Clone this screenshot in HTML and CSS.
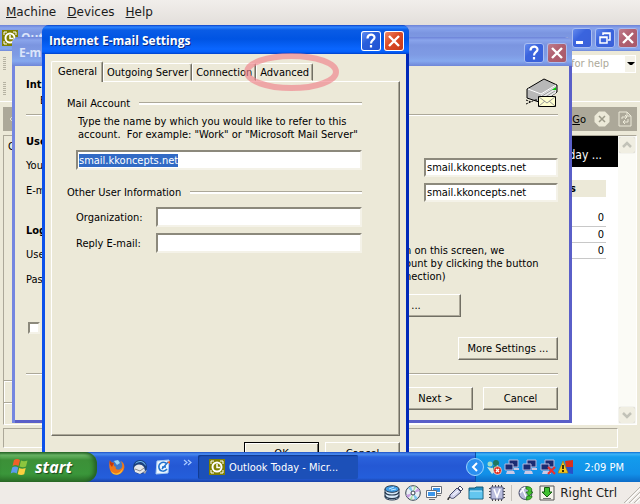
FILE: index.html
```
<!DOCTYPE html>
<html lang="en">
<head>
  <meta charset="UTF-8">
  <title>Internet E-mail Settings</title>
  <link rel="stylesheet" href="styles.css">
</head>
<body>
<nav class="vm-menu">
  <a href="#"><u>M</u>achine</a>
  <a href="#"><u>D</u>evices</a>
  <a href="#"><u>H</u>elp</a>
</nav>

<main class="desktop">
  <!-- Outlook main window -->
  <section class="outlook">
    <header class="titlebar inactive">
      <svg class="clock" width="16" height="16" viewBox="0 0 16 16"><rect width="16" height="16" fill="#808000"/><path d="M2 5V2h3M11 2h3v3M14 11v3h-3M5 14H2v-3" fill="none" stroke="#fff"/><circle cx="8" cy="8" r="4.5" fill="none" stroke="#fff" stroke-width="2"/><path d="M8 5v3.500h3" fill="none" stroke="#fff" stroke-width="1.500"/></svg>
      <h2>Out</h2>
      <button class="cap" aria-label="Minimize"><svg width="20" height="20" viewBox="0 0 20 20"><path d="M4 13h7v3H4z" fill="#fff"/></svg></button>
      <button class="cap" aria-label="Restore"><svg width="20" height="20" viewBox="0 0 20 20"><path d="M8 7V5h7v7h-2M8 5.500h7" fill="none" stroke="#fff" stroke-width="1.500"/><path d="M5 9h7v6H5zM5 9.500h7" fill="none" stroke="#fff" stroke-width="1.500"/></svg></button>
      <button class="cap close" aria-label="Close"><svg width="20" height="20" viewBox="0 0 20 20"><path d="M5 5l10 10M15 5L5 15" stroke="#fff" stroke-width="2.400"/></svg></button>
    </header>
    <div class="bar">
      <i class="grip"></i>
      <div class="ask"><span>for help</span><button aria-label="Open list"></button></div>
    </div>
    <div class="bar tools"><i class="grip"></i></div>
    <div class="folder">
      <svg width="9" height="12" viewBox="0 0 9 12"><path d="M8 2L4 6l4 4" fill="none" stroke="#e4e1d2"/></svg>
      <a href="#"><u>G</u>o</a>
      <svg width="16" height="16" viewBox="0 0 16 16"><path d="M5 .5h6L15.500 5v6L11 15.500H5L.5 11V5z" fill="#ece9d8"/><path d="M5 5l6 6M11 5l-6 6" stroke="#9c9a89" stroke-width="1.500"/></svg>
      <svg width="14" height="16" viewBox="0 0 14 16"><path d="M1 1h8l4 4v10H1z" fill="none" stroke="#ece9d8"/><path d="M9 1v4h4M4 8V6h5M7 4l2 2-2 2M10 8v3H5M7 9l-2 2 2 2" fill="none" stroke="#ece9d8"/></svg>
    </div>
    <div class="panes">
      <div class="side"><p>C</p><span></span><span></span></div>
      <div class="today">
        <h3>day ...</h3>
        <table>
          <tr><th>s</th></tr>
          <tr class="gap"><td></td></tr>
          <tr><td>0</td></tr>
          <tr><td>0</td></tr>
          <tr><td>0</td></tr>
        </table>
      </div>
      <div class="scroll">
        <button aria-label="Scroll up"><svg width="16" height="16" viewBox="0 0 16 16"><path d="M4 10l4-4 4 4" fill="none" stroke="#c2c2b8" stroke-width="2.500"/></svg></button>
        <button aria-label="Scroll down"><svg width="16" height="16" viewBox="0 0 16 16"><path d="M4 6l4 4 4-4" fill="none" stroke="#c2c2b8" stroke-width="2.500"/></svg></button>
      </div>
    </div>
    <footer class="status"></footer>
  </section>

  <!-- E-mail account wizard -->
  <section class="window wizard">
    <header class="titlebar inactive">
      <h2>E-m</h2>
      <button class="cap" aria-label="Help"><svg width="20" height="20" viewBox="0 0 20 20"><path d="M6.500 7.500c0-5 7-5 7-1 0 2.500-3.500 2.500-3.500 6M10 14v2.500" fill="none" stroke="#fff" stroke-width="2.200"/></svg></button>
      <button class="cap close" aria-label="Close"><svg width="20" height="20" viewBox="0 0 20 20"><path d="M5 5l10 10M15 5L5 15" stroke="#fff" stroke-width="2.400"/></svg></button>
    </header>
    <div class="intro">
      <div>
        <h3>Int</h3>
        <p>E</p>
      </div>
      <svg width="32" height="30" viewBox="0 0 32 30">
        <path d="M1 11L18 1l13 6v7L16 25 1 20z" fill="#b8b8b8" stroke="#000"/>
        <path d="M2 11l13 5 15-9" fill="none" stroke="#fff"/>
        <path d="M15 17l15-9v7L16 24z" fill="#e8e8e8"/>
        <path d="M16 21l13-8M16 18l13-8" stroke="#999"/>
        <path d="M26 12h4V9z" fill="#00d000"/>
        <path d="M0 26l9-4M0 22l5 2M9 22h5" stroke="#000" stroke-dasharray="2 1"/>
        <path d="M12.500 18.500h17v10h-17z" fill="#ffffd0" stroke="#000"/>
        <path d="M13 19l8 6 8-6M13 28l6-5M29 28l-6-5" fill="none" stroke="#999"/>
      </svg>
    </div>
    <div class="account">
      <div class="labels">
        <h3>Use</h3>
        <p>You</p>
        <p>E-m</p>
        <h3>Log</h3>
        <p>Use</p>
        <p>Pas</p>
        <input class="check" type="checkbox" aria-label="Log on">
      </div>
      <div class="servers">
        <input class="field" type="text" value="smail.kkoncepts.net" aria-label="Incoming mail server">
        <input class="field" type="text" value="smail.kkoncepts.net" aria-label="Outgoing mail server">
        <p>n on this screen, we<br>ount by clicking the button<br>nection)</p>
        <button class="btn test">...</button>
        <button class="btn more">More Settings ...</button>
      </div>
    </div>
    <div class="actions">
      <button class="btn">Next &gt;</button>
      <button class="btn">Cancel</button>
    </div>
  </section>

  <!-- Settings dialog -->
  <section class="window settings">
    <header class="titlebar">
      <h1>Internet E-mail Settings</h1>
      <button class="cap" aria-label="Help"><svg width="20" height="20" viewBox="0 0 20 20"><path d="M6.500 7.500c0-5 7-5 7-1 0 2.500-3.500 2.500-3.500 6M10 14v2.500" fill="none" stroke="#fff" stroke-width="2.200"/></svg></button>
      <button class="cap close" aria-label="Close"><svg width="20" height="20" viewBox="0 0 20 20"><path d="M5 5l10 10M15 5L5 15" stroke="#fff" stroke-width="2.400"/></svg></button>
    </header>
    <div class="tabs">
      <button class="current">General</button>
      <button>Outgoing Server</button>
      <button>Connection</button>
      <button>Advanced</button>
    </div>
    <form class="panel">
      <h3 class="rule">Mail Account</h3>
      <label class="about" for="account">Type the name by which you would like to refer to this account.&nbsp; For example: "Work" or "Microsoft Mail Server"</label>
      <input class="field name" id="account" type="text" value="smail.kkoncepts.net">
      <h3 class="rule second">Other User Information</h3>
      <div class="row">
        <label for="org">Organization:</label>
        <input class="field" id="org" type="text">
      </div>
      <div class="row">
        <label for="reply">Reply E-mail:</label>
        <input class="field" id="reply" type="text">
      </div>
    </form>
    <div class="buttons">
      <button class="btn default">OK</button>
      <button class="btn">Cancel</button>
    </div>
    <svg class="ring" width="97" height="40" viewBox="0 0 97 40"><ellipse cx="48.500" cy="20" rx="44.500" ry="16" fill="none" stroke="#f0828c" stroke-opacity=".65" stroke-width="6"/></svg>
  </section>
</main>

<footer class="taskbar">
  <button class="start">
    <svg width="20" height="20" viewBox="0 0 20 20"><path d="M4 3c2-1.500 4-1.500 6 0L8.500 9c-2-1.200-4-1.200-6 0z" fill="#f0602a"/><path d="M11 3.500c2 1 4 1 6.500 0L16 9.500c-2 1-4 1-6.500 0z" fill="#8cc63e"/><path d="M2.200 10.500c2-1.500 4-1.200 6 0l-1.500 6c-2-1.200-4-1.200-6 0z" fill="#5a9cf0"/><path d="M9.200 11c2 1 4 1 6.500 0l-1.500 6.200c-2 1-4 1-6.500 0z" fill="#fbd040"/></svg>
    start
  </button>
  <div class="quick">
    <svg width="16" height="16" viewBox="0 0 16 16"><circle cx="8" cy="8" r="7" fill="#3f79c8"/><path d="M5 2l4-1 2 3-3 2z" fill="#9bd4f4"/><path d="M1 1c0 2 2 3 4 3-1 2 0 3 2 4-2 3 5 4 6 0 1-3-1-5-1-6 3 2 4 5 3 8-2 7-12 7-14 1C0 8 0 4 1 1z" fill="#f07818"/><path d="M1 1c0 2 2 3 4 3L3 8C1 6 0 4 1 1z" fill="#c83808"/><path d="M2 12c4 4 9 3 12-3-1 8-10 9-12 3z" fill="#fbbc30"/></svg>
    <svg width="16" height="16" viewBox="0 0 16 16"><circle cx="8" cy="8" r="7" fill="#1c3f7c"/><path d="M3 5c3-5 10-3 11 2l-3-3c-2-2-5-1-8 1z" fill="#69b2ee"/><path d="M2 9c1-4 7-5 10-1l1 4-5 3-5-2z" fill="#e8e8ea"/><path d="M3 10l5 2 4-3" fill="none" stroke="#888"/><path d="M11 13l4-2-2 4z" fill="#a8a8a8"/></svg>
    <svg width="16" height="16" viewBox="0 0 16 16"><path d="M2 2l12-1-1 13-12 1z" fill="#eef7ff" stroke="#a8cdf4"/><path d="M11 4C7 2 3 5 4 9s6 4 8 1M7 10l6-7M7 8h4" fill="none" stroke="#2274cf" stroke-width="1.500"/><path d="M12 3l3-1v3z" fill="#f05820"/></svg>
    <svg class="chevrons" width="10" height="8" viewBox="0 0 10 8"><path d="M1 1l3 2.500L1 6M5 1l3 2.500L5 6" fill="none" stroke="#a9cbff" stroke-width="1.200"/></svg>
  </div>
  <button class="task">
    <svg class="clock" width="16" height="16" viewBox="0 0 16 16"><rect width="16" height="16" fill="#808000"/><path d="M2 5V2h3M11 2h3v3M14 11v3h-3M5 14H2v-3" fill="none" stroke="#fff"/><circle cx="8" cy="8" r="4.500" fill="none" stroke="#fff" stroke-width="2"/><path d="M8 5v3.500h3" fill="none" stroke="#fff" stroke-width="1.500"/></svg>
    Outlook Today - Micr...
  </button>
  <div class="tray">
    <button class="expand" aria-label="Show hidden icons"><svg width="18" height="18" viewBox="0 0 18 18"><circle cx="9" cy="9" r="8.500" fill="#2a8ff0" stroke="#9bd4fc"/><path d="M11 5L7 9l4 4" fill="none" stroke="#fff" stroke-width="2"/></svg></button>
    <svg width="16" height="16" viewBox="0 0 16 16"><circle cx="10" cy="4" r="3" fill="#207860"/><circle cx="4" cy="5" r="2.500" fill="#9fdcc8"/><path d="M1 8l5 1 6-3-1 5-5 4z" fill="#cfe8e0"/><path d="M7 7h6l1 5H7z" fill="#318b73"/><circle cx="11.500" cy="11.500" r="4" fill="#e2301e" stroke="#fff" stroke-width=".6"/><path d="M10 10l3 3M13 10l-3 3" stroke="#fff" stroke-width="1.300"/></svg>
    <svg width="16" height="16" viewBox="0 0 16 16"><path d="M5 1h9v7H5z" fill="#1b2c72" stroke="#b6b8dc"/><path d="M1 5h8v6H1z" fill="#1b2c72" stroke="#b6b8dc"/><path d="M3 12h7l1 3H2zM10 9h5v2h-5z" fill="#c9c9e6"/></svg>
    <svg width="16" height="16" viewBox="0 0 16 16"><path d="M5 1h9v7H5z" fill="#1b2c72" stroke="#b6b8dc"/><path d="M1 5h8v6H1z" fill="#1b2c72" stroke="#b6b8dc"/><path d="M3 12h7l1 3H2zM10 9h5v2h-5z" fill="#c9c9e6"/></svg>
    <svg width="16" height="16" viewBox="0 0 16 16"><path d="M5 1h9v7H5z" fill="#1b2c72" stroke="#b6b8dc"/><path d="M1 5h8v6H1z" fill="#1b2c72" stroke="#b6b8dc"/><path d="M3 12h7l1 3H2z" fill="#c9c9e6"/><path d="M8 8l7 7M15 8l-7 7" stroke="#e83030" stroke-width="2.200"/></svg>
    <svg width="16" height="16" viewBox="0 0 16 16"><path d="M7 2l8-1v7H8z" fill="#d8301c"/><path d="M8 8h7v7l-7-1z" fill="#2850c8"/><path d="M5 2l5 12H0z" fill="#f7c61c" stroke="#a87800" stroke-width=".6"/><path d="M5 6v4M5 11v2" stroke="#000" stroke-width="1.500"/></svg>
    <time>2:09 PM</time>
  </div>
</footer>

<footer class="vm-status">
  <svg width="16" height="16" viewBox="0 0 16 16"><path d="M1 4v8c0 4 14 4 14 0V4z" fill="#d7e9f7" stroke="#25384f"/><ellipse cx="8" cy="4" rx="7" ry="3.300" fill="#3e9ee8" stroke="#25384f"/><path d="M1 7c1 4 13 4 14 0M1 10.500c1 4 13 4 14 0" fill="none" stroke="#25384f" stroke-width="1.200"/><path d="M5 4l5-2M7 5l5-1" stroke="#c8e8ff"/></svg>
  <svg width="16" height="16" viewBox="0 0 16 16"><circle cx="8" cy="8" r="7.300" fill="#e8eef4" stroke="#34424f"/><path d="M8 8L3 3l3-2zM8 8l5 5-3 2z" fill="#7ec6ee"/><path d="M8 8l5-5 2 3zM8 8l-5 5-2-3z" fill="#c8a0e0"/><path d="M8 8l1-7 2 1zM8 8l-1 7-2-1z" fill="#a8e0a0"/><circle cx="8" cy="8" r="2" fill="#fff" stroke="#34424f"/></svg>
  <svg width="16" height="16" viewBox="0 0 16 16"><path d="M5.500 1.500h10v7h-10z" fill="#fff" stroke="#6a6f78"/><path d="M7 3h7v4H7z" fill="#3c96ea"/><path d="M11 10.500h4" stroke="#777"/><path d="M.5 5.500h10v7H.5z" fill="#fff" stroke="#6a6f78"/><path d="M2 7h7v4H2z" fill="#3c96ea"/><path d="M3 14.500h6" stroke="#6a6f78"/></svg>
  <svg width="16" height="16" viewBox="0 0 16 16"><path d="M1 15c0-3 2-2 3-4" fill="none" stroke="#333" stroke-width="1.500"/><path d="M3 10l7-7 4 4-7 6c-2 1-5 0-4-3z" fill="#d4d5ef" stroke="#434766"/><path d="M11 3l2-2 3 3-2 2z" fill="#fff" stroke="#434766"/><path d="M6 10l5-4" stroke="#fff"/></svg>
  <svg width="16" height="16" viewBox="0 0 16 16"><path d="M1 14V3h6l1-1h7v12z" fill="#218fc4" stroke="#165874"/><path d="M1.500 6h13v7.500h-13z" fill="#63c6ef"/><path d="M2 6h12" stroke="#c9f0ff"/></svg>
  <svg width="16" height="16" viewBox="0 0 16 16"><path d="M3.500 0v16M6.500 0v16M9.500 0v16M12.500 0v16M0 3.500h16M0 6.500h16M0 9.500h16M0 12.500h16" stroke="#444"/><path d="M2 2h12v12H2z" fill="#b9bddd" stroke="#5b5f84"/><path d="M5 4l3 8 3-8" fill="none" stroke="#fff" stroke-width="1.600"/></svg>
  <i class="sep"></i>
  <svg width="16" height="16" viewBox="0 0 16 16"><circle cx="7.500" cy="8" r="6.500" fill="#b8bbd9" stroke="#454969"/><path d="M4 3l4 9M2 8l5-6" stroke="#fff" stroke-width="1.500"/><path d="M8 2c5-1 7 2 5 5h2l-4 4-3-4h2c1-2 0-3-2-3zM9 11h5c0 3-3 4-6 4z" fill="#45c030" stroke="#176a10" stroke-width=".7"/></svg>
  <svg width="16" height="16" viewBox="0 0 16 16"><path d="M1 1h14v14H1z" fill="#f3f3ea" stroke="#555"/><path d="M5.500 2.500h5V7H13l-5 5-5-5h2.500z" fill="#3fc030" stroke="#145c10"/><path d="M4 13.500h8" stroke="#777"/></svg>
  <span>Right Ctrl</span>
  <svg class="resize" width="16" height="20" viewBox="0 0 16 20"><path d="M0 20L16 4M5 20L16 9M10 20l6-6" stroke="#b9b6b0"/><path d="M2 20L16 6M7 20l9-9M12 20l4-4" stroke="#fff"/></svg>
</footer>
<script src="main.js"></script>
</body>
</html>
```
FILE: styles.css
```
* {
  box-sizing: border-box;
  margin: 0;
  padding: 0;
}

body {
  display: flex;
  flex-direction: column;
  height: 100vh;
  overflow: hidden;
  background: #efebe7;
  color: #000;
  font: 11px/13px "DejaVu Sans Condensed", "DejaVu Sans", sans-serif;
}

h1, h2, h3 {
  font-size: 11px;
}

button, input {
  font: inherit;
  color: inherit;
}

button {
  border: 0;
  background: none;
}

a {
  color: inherit;
  text-decoration: none;
}

svg {
  display: block;
  flex: none;
}

.vm-menu {
  display: flex;
  gap: 11px;
  height: 25px;
  padding: 0 6px;
  background: linear-gradient(#f1eeeb, #e3dfdb);
  color: #1a1a1a;
  font: 12px/25px "DejaVu Sans", sans-serif;
}

.desktop {
  position: relative;
  flex: 1;
  overflow: hidden;
  background: #ece9d8;
}

/* title bars */
.titlebar {
  display: flex;
  align-items: center;
  gap: 3px;
  height: 29px;
  padding: 2px 5px 0 7px;
  background: linear-gradient(#0a3fc4, #2d84ff 2px, #0a5ce6 5px, #0054e3 14px, #0a66ff 24px, #0460fb 27px, #0040c8);
  color: #fff;
}

.titlebar h1, .titlebar h2 {
  flex: 1;
  font: bold 12px/16px "Open Sans", sans-serif;
  text-shadow: 1px 1px #0a2a80;
}

.titlebar.inactive {
  background: linear-gradient(#6c82d8, #8aa5ec 3px, #7b95e0 8px, #7f9be4 18px, #85a8ee 24px, #6f86d8);
}

.titlebar.inactive h2 {
  color: #dbe4fa;
  text-shadow: none;
}

.cap {
  width: 20px;
  height: 20px;
  border-radius: 3px;
  background: linear-gradient(135deg, #6a94f4, #2a5fdc 40%, #2050d0);
  box-shadow: inset 0 0 0 1px #fff;
}

.cap.close {
  background: linear-gradient(135deg, #f09070, #dc4a24 45%, #c43818);
}

.inactive .cap {
  background: linear-gradient(135deg, #6a90f0, #3a64de 40%, #3a60d8);
  box-shadow: inset 0 0 0 1px #a9bdf0;
}

.inactive .cap.close {
  background: linear-gradient(135deg, #c08090, #b06070 45%, #a85868);
}

/* outlook */
.outlook {
  display: flex;
  flex-direction: column;
  height: 100%;
  padding-bottom: 4px;
}

.outlook .titlebar {
  height: 26px;
  padding: 0 2px;
}

.bar {
  display: flex;
  align-items: center;
  justify-content: space-between;
  height: 25px;
  padding: 0 4px 0 3px;
}

.tools {
  height: 26px;
  border-bottom: 1px solid #fff;
}

.grip {
  width: 3px;
  height: 14px;
  background: repeating-linear-gradient(#b5b2a2 0 1px, #ece9d8 1px 2px);
}

.ask {
  display: flex;
  justify-content: space-between;
  width: 67px;
  height: 18px;
  padding-left: 2px;
  background: #fff;
  color: #aca899;
  line-height: 17px;
}

.ask button {
  width: 12px;
  border: 1px solid #fff;
  background: #f4f2e8;
}

.ask button::before {
  content: "";
  display: block;
  border: 3px solid transparent;
  border-top-color: #000;
  border-bottom: 0;
  margin-left: 2px;
}

.folder {
  display: flex;
  align-items: center;
  gap: 8px;
  height: 24px;
  margin: 5px 3px 4px;
  padding: 0 5px 0 3px;
  background: #aca899;
}

.folder a {
  margin-left: auto;
}

.panes {
  display: flex;
  flex: 1;
  margin: 0 3px;
  border: 1px solid #aca899;
  border-color: #aca899 #fff #fff #aca899;
}

.side {
  display: flex;
  flex-direction: column;
  width: 120px;
}

.side p {
  flex: 1;
  padding: 4px;
}

.side span {
  height: 22px;
  border-top: 1px solid #aca899;
  box-shadow: inset 1px 1px #fff;
}

.today {
  flex: 1;
  padding-right: 12px;
  background: #fff;
}

.today h3 {
  height: 31px;
  margin-right: -12px;
  padding: 13px 16px 0 0;
  background: #000;
  color: #fff;
  font-size: 12px;
  font-weight: normal;
  text-align: right;
}

.today table {
  width: 100%;
  margin-top: 13px;
  border-collapse: collapse;
}

.today th {
  height: 17px;
  padding-right: 30px;
  background: #ece9d8;
  text-align: right;
}

.today td {
  height: 16px;
  padding-right: 2px;
  border-bottom: 1px solid #c8c8c8;
  text-align: right;
}

.today .gap td {
  height: 13px;
  border: 0;
}

.scroll {
  display: flex;
  flex-direction: column;
  justify-content: space-between;
  width: 18px;
  padding: 1px;
  background: #fbfbf6;
}

.scroll button {
  height: 16px;
  border-radius: 2px;
  background: #f0eee2;
  box-shadow: 0 0 1px #aaa;
}

.status {
  height: 20px;
  margin: 3px 22px 0 3px;
  border: 1px solid #aca899;
  border-color: #aca899 #fff #fff #aca899;
}

/* dialogs */
.window {
  position: absolute;
  border-radius: 7px 7px 0 0;
  background: #ece9d8;
}

.wizard {
  top: 12px;
  left: 12px;
  width: 560px;
  box-shadow: inset 3px 0 #7486e0, inset -3px -3px #5a5fc8;
}

.settings {
  top: 0;
  left: 42px;
  width: 367px;
  height: 450px;
  box-shadow: inset 3px 0 #0c50ea, inset -3px 0 #0028b8;
}

.window .titlebar {
  border-radius: 7px 7px 0 0;
}

/* raised and sunken controls */
.btn {
  height: 23px;
  min-width: 75px;
  border: 1px solid;
  border-color: #fff #716f64 #716f64 #fff;
  box-shadow: inset -1px -1px #aca899;
  background: #ece9d8;
}

.btn.default {
  outline: 1px solid #000;
  outline-offset: -1px;
  box-shadow: inset 1px 1px #fff, inset -1px -1px #716f64;
}

.field {
  display: block;
  width: 100%;
  height: 20px;
  padding: 0 1px;
  border: 2px solid;
  border-color: #8c897c #f4f2e8 #f4f2e8 #8c897c;
  background: #fff;
  outline: 0;
}

.field::selection {
  background: #316ac5;
  color: #fff;
}

.check {
  display: block;
  appearance: none;
  width: 12px;
  height: 12px;
  margin: 24px 2px;
  border: 2px solid;
  border-color: #8c897c #f4f2e8 #f4f2e8 #8c897c;
  background: #fff;
}

/* wizard */
.intro {
  display: flex;
  justify-content: space-between;
  height: 49px;
  margin: 0 14px;
  padding: 12px 0 0;
  border-bottom: 1px solid #aca899;
  box-shadow: 0 1px #fff;
}

.intro p {
  padding: 3px 14px;
}

.account {
  display: flex;
  justify-content: space-between;
  height: 258px;
  margin: 0 14px;
}

.labels h3 {
  padding: 20px 0 11px;
}

.labels p {
  padding-bottom: 12px;
}

.labels p + h3 {
  padding-top: 15px;
}

.servers {
  display: flex;
  flex-direction: column;
  gap: 6px;
  width: 155px;
  padding-top: 43px;
}

.servers .field {
  align-self: flex-end;
  width: 134px;
  height: 19px;
}

.servers p {
  margin: 36px 0 5px;
  padding-left: 2px;
  white-space: nowrap;
}

.servers .test {
  width: 58px;
  min-width: 0;
  padding-right: 32px;
}

.servers .more {
  align-self: flex-end;
  width: 100px;
  margin-top: 14px;
}

.actions {
  display: flex;
  justify-content: flex-end;
  gap: 10px;
  margin: 0 14px;
  padding: 13px 0;
  border-top: 1px solid #aca899;
  box-shadow: inset 0 1px #fff;
}

/* settings dialog */
.tabs {
  display: flex;
  align-items: flex-end;
  margin: 7px 9px 0;
}

.tabs button {
  height: 18px;
  padding: 0 3px;
  border: 1px solid;
  border-color: #fff #716f64 transparent #fff;
  border-radius: 2px 2px 0 0;
  box-shadow: inset -1px 0 #aca899;
}

.tabs .current {
  position: relative;
  height: 21px;
  margin-bottom: -1px;
  padding: 0 5px 2px 6px;
  border-bottom: 0;
  background: #ece9d8;
}

.panel {
  height: 355px;
  margin: 0 9px;
  padding: 15px 37px 0 15px;
  border: 1px solid;
  border-color: #fff #716f64 #716f64 #fff;
  box-shadow: inset -1px -1px #aca899;
}

.rule {
  display: flex;
  align-items: center;
  gap: 9px;
  font-weight: normal;
}

.rule::after {
  content: "";
  flex: 1;
  height: 2px;
  border-top: 1px solid #aca899;
  background: #fff;
}

.about {
  display: block;
  margin: 5px -10px 9px 11px;
}

.panel .name {
  width: auto;
  min-width: 286px;
  margin-left: 9px;
}

.second {
  margin: 16px 0 8px;
}

.row {
  display: flex;
  align-items: center;
  margin: 0 0 6px 9px;
}

.row label {
  flex: none;
  width: 80px;
}

.buttons {
  display: flex;
  justify-content: flex-end;
  gap: 6px;
  margin: 6px 9px;
}

.ring {
  position: absolute;
  top: 27px;
  left: 201px;
}

/* taskbar */
.taskbar {
  display: flex;
  align-items: center;
  height: 30px;
  background: linear-gradient(#1f50c4, #4a8cf0 2px, #2a62dc 5px, #2458d4 14px, #245edb 26px, #1941a5);
  color: #fff;
}

.start {
  display: flex;
  align-items: center;
  gap: 5px;
  width: 97px;
  height: 30px;
  padding-left: 10px;
  border-radius: 0 12px 12px 0;
  background: linear-gradient(#2a6c2a, #6cb868 3px, #3c9038 8px, #3a963a 22px, #2c7028);
  box-shadow: inset -3px 0 4px #245e24;
  font: italic bold 16px/28px "Open Sans", sans-serif;
  text-shadow: 1px 1px 1px #1c481c;
}

.quick {
  display: flex;
  gap: 7px;
  width: 101px;
  padding-left: 12px;
}

.chevrons {
  margin-left: 5px;
}

.task {
  display: flex;
  align-items: center;
  gap: 4px;
  width: 160px;
  height: 24px;
  padding-left: 11px;
  border-radius: 2px;
  background: #1c50b8;
  box-shadow: inset 1px 1px 1px #123a90;
}

.tray {
  display: flex;
  align-items: center;
  gap: 2px;
  height: 30px;
  margin-left: auto;
  padding-right: 16px;
  background: linear-gradient(#0c6cd0, #3cb4f8 2px, #139cec 5px, #1290e8 22px, #0c6cc8);
  box-shadow: inset 1px 0 #0c50a8;
}

.expand {
  margin-left: -9px;
}

.tray time {
  margin-left: 8px;
}

/* status bar of the virtual machine */
.vm-status {
  display: flex;
  align-items: center;
  justify-content: flex-end;
  gap: 5px;
  height: 22px;
  font: 12px/20px "DejaVu Sans", sans-serif;
  color: #222;
}

.sep {
  width: 1px;
  height: 16px;
  margin: 0 1px;
  background: #c4c0ba;
}

.resize {
  margin-left: 2px;
}
```
FILE: main.js
```
// account name starts out selected
var account = document.getElementById("account");
account.focus();
account.select();
```
